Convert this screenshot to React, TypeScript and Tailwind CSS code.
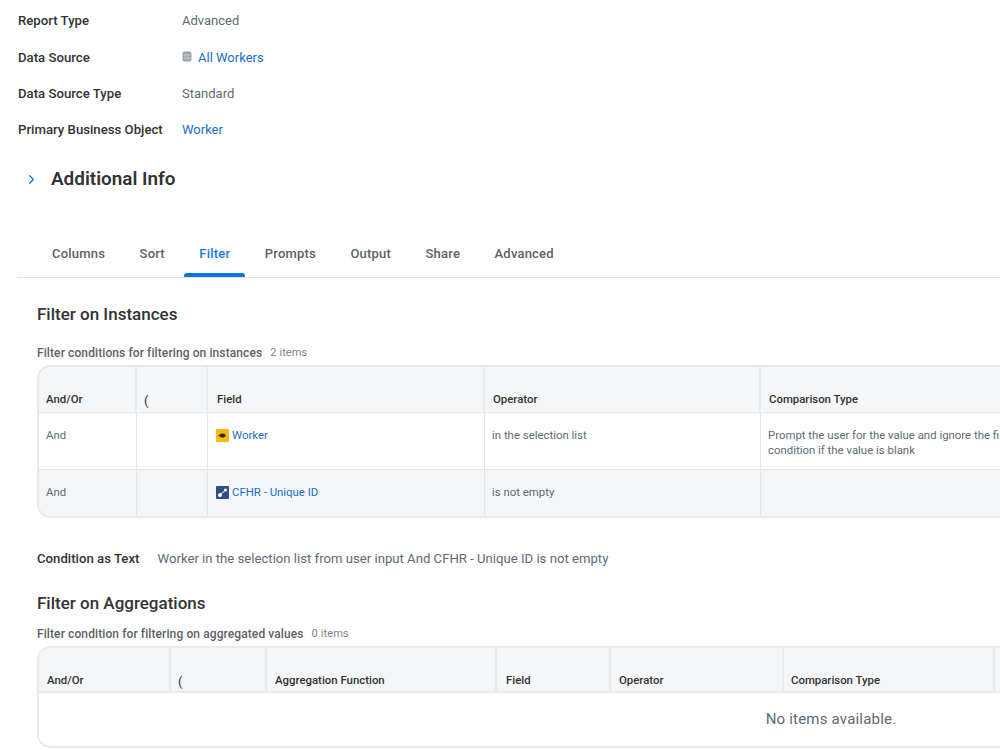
import React from 'react';
import { ChevronRight } from 'lucide-react';

const tabs = ['Columns', 'Sort', 'Filter', 'Prompts', 'Output', 'Share', 'Advanced'];

const InfoRow = ({ label, children }: { label: string; children: React.ReactNode }) => (
  <div className="flex h-[36.4px] items-center leading-[20px]">
    <div className="w-[164px] text-[13.2px] font-medium text-[#333333]">{label}</div>
    <div className="text-[13px] text-[#5e6a75]">{children}</div>
  </div>
);

const WorkerIcon = () => (
  <svg width="13" height="13" viewBox="0 0 13 13" className="shrink-0">
    <rect width="13" height="13" rx="1" fill="#fdb913" />
    <ellipse cx="6.5" cy="6.5" rx="3" ry="2" fill="#2b2b2b" />
    <circle cx="3" cy="6.5" r="0.7" fill="#2b2b2b" />
  </svg>
);

const FieldIcon = () => (
  <svg width="13" height="13" viewBox="0 0 13 13" className="shrink-0">
    <rect width="13" height="13" rx="1" fill="#2f4f82" />
    <path d="M4 9 L9.5 4" stroke="#fff" strokeWidth="1" />
    <circle cx="4" cy="9" r="2" fill="#fff" />
    <circle cx="9.5" cy="4" r="1.6" fill="#fff" />
  </svg>
);

const HeadCell = ({
  children,
  last,
  pad = 'pl-[8px]',
  bottom = 'pb-[4px]',
}: {
  children?: React.ReactNode;
  last?: boolean;
  pad?: string;
  bottom?: string;
}) => (
  <div className={`flex items-end ${bottom} ${pad} text-[11.4px] font-medium text-[#333333] ${last ? '' : 'border-r-2 border-[#e8ebed]'}`}>
    {children}
  </div>
);

const Cell = ({ children, last, pad = 'pl-[7px]' }: { children?: React.ReactNode; last?: boolean; pad?: string }) => (
  <div className={`${pad} pt-[15px] text-[11.4px] leading-[15px] text-[#5e6a75] ${last ? '' : 'border-r border-[#e3e6e9]'}`}>
    {children}
  </div>
);

const App = () => {
  return (
    <div className="h-[750px] w-[1000px] overflow-hidden bg-white font-['Roboto',sans-serif]">
      <div className="pl-[18px] pt-[3px]">
        <InfoRow label="Report Type">Advanced</InfoRow>
        <InfoRow label="Data Source">
          <span className="flex items-center gap-[6px] text-[#1a6fc4]">
            <svg width="10" height="11" viewBox="0 0 10 11" className="mb-[2px]">
              <rect x="1" y="1" width="8" height="9" rx="1.5" fill="#a3abb3" stroke="#7b858f" strokeWidth="0.8" />
              <path d="M1 4h8M1 7h8" stroke="#e3e6e9" strokeWidth="0.6" />
            </svg>
            All Workers
          </span>
        </InfoRow>
        <InfoRow label="Data Source Type">Standard</InfoRow>
        <InfoRow label="Primary Business Object">
          <span className="text-[#1a6fc4]">Worker</span>
        </InfoRow>
      </div>

      <div className="mt-[16.9px] flex h-[28px] items-center pl-[24px]">
        <ChevronRight className="h-[15px] w-[15px] text-[#1a6fc4]" strokeWidth={2} />
        <h2 className="ml-[12px] text-[18.9px] font-semibold text-[#333333]">Additional Info</h2>
      </div>

      <div className="ml-[17px] mt-[28.5px] flex h-[56px] items-stretch gap-[4.5px] border-b border-[#e3e6e9] pl-[20px]">
        {tabs.map((tab) => (
          <div key={tab} className="relative flex items-start px-[15px] pt-[22px] text-[13px] font-medium tracking-[0.2px]">
            <span className={tab === 'Filter' ? 'text-[#1a7ae0]' : 'text-[#5e6166]'}>{tab}</span>
            {tab === 'Filter' && (
              <span className="absolute bottom-0 left-0 right-0 h-[4px] rounded-t-[3px] bg-[#0875e1]" />
            )}
          </div>
        ))}
      </div>

      <div className="pl-[37px]">
        <h3 className="mt-[26px] text-[17px] font-medium leading-[20px] text-[#333333]">Filter on Instances</h3>
        <div className="mt-[21px] flex items-center text-[12px] leading-[16px] tracking-[0.1px]">
          <span className="font-medium text-[#5e6166]">Filter conditions for filtering on instances</span>
          <span className="ml-[8px] text-[11px] text-[#7b858f]">2 items</span>
        </div>
        <div className="mt-[4px] w-[1500px] overflow-hidden rounded-l-[14px] border-y-2 border-l-2 border-[#e8ebed]">
          <div className="grid h-[46px] grid-cols-[98px_71px_277px_276px_1fr] border-b border-[#e3e6e9] bg-[#f5f6f8]">
            <HeadCell pad="pl-[7px]">And/Or</HeadCell>
            <HeadCell pad="pl-[7px]">
              <span className="text-[13px] font-normal leading-[14px]">(</span>
            </HeadCell>
            <HeadCell pad="pl-[9px]">Field</HeadCell>
            <HeadCell>Operator</HeadCell>
            <HeadCell last>Comparison Type</HeadCell>
          </div>
          <div className="grid h-[57px] grid-cols-[98px_71px_277px_276px_1fr] border-b border-[#e3e6e9] bg-white">
            <Cell>And</Cell>
            <Cell />
            <Cell pad="pl-[8px]">
              <span className="flex items-center gap-[3px] text-[#1a6fc4]">
                <WorkerIcon />
                Worker
              </span>
            </Cell>
            <Cell>in the selection list</Cell>
            <Cell last>
              Prompt the user for the value and ignore the filter
              <br />
              condition if the value is blank
            </Cell>
          </div>
          <div className="grid h-[46px] grid-cols-[98px_71px_277px_276px_1fr] bg-[#f5f6f8]">
            <Cell>And</Cell>
            <Cell />
            <Cell pad="pl-[8px]">
              <span className="flex items-center gap-[3px] text-[#1a6fc4]">
                <FieldIcon />
                CFHR - Unique ID
              </span>
            </Cell>
            <Cell>is not empty</Cell>
            <Cell last />
          </div>
        </div>

        <div className="mt-[32px] flex items-center leading-[18px]">
          <span className="text-[13.2px] font-medium text-[#333333]">Condition as Text</span>
          <span className="ml-[18px] text-[13.15px] text-[#5e6a75]">Worker in the selection list from user input And CFHR - Unique ID is not empty</span>
        </div>

        <h3 className="mt-[25px] text-[17px] font-medium leading-[20px] text-[#333333]">Filter on Aggregations</h3>
        <div className="mt-[13px] flex items-center text-[12px] leading-[16px] tracking-[0.1px]">
          <span className="font-medium text-[#5e6166]">Filter condition for filtering on aggregated values</span>
          <span className="ml-[8px] text-[11px] text-[#7b858f]">0 items</span>
        </div>
        <div className="mt-[4px] w-[1588px] overflow-hidden rounded-[14px] border-2 border-[#e8ebed]">
          <div className="grid h-[45px] grid-cols-[132px_96px_230px_114px_173px_211px_1fr] border-b-2 border-[#e8ebed] bg-[#f5f6f8]">
            <HeadCell bottom="pb-[2px]">And/Or</HeadCell>
            <HeadCell pad="pl-[7px]" bottom="pb-[2px]">
              <span className="text-[13px] font-normal leading-[14px]">(</span>
            </HeadCell>
            <HeadCell bottom="pb-[2px]">Aggregation Function</HeadCell>
            <HeadCell pad="pl-[9px]" bottom="pb-[2px]">Field</HeadCell>
            <HeadCell bottom="pb-[2px]">Operator</HeadCell>
            <HeadCell pad="pl-[7px]" bottom="pb-[2px]">Comparison Type</HeadCell>
            <HeadCell last />
          </div>
          <div className="flex h-[53px] items-center justify-center bg-white text-[15px] tracking-[0.2px] text-[#5e6a75]">
            No items available.
          </div>
        </div>
      </div>
    </div>
  );
};

export default App;
